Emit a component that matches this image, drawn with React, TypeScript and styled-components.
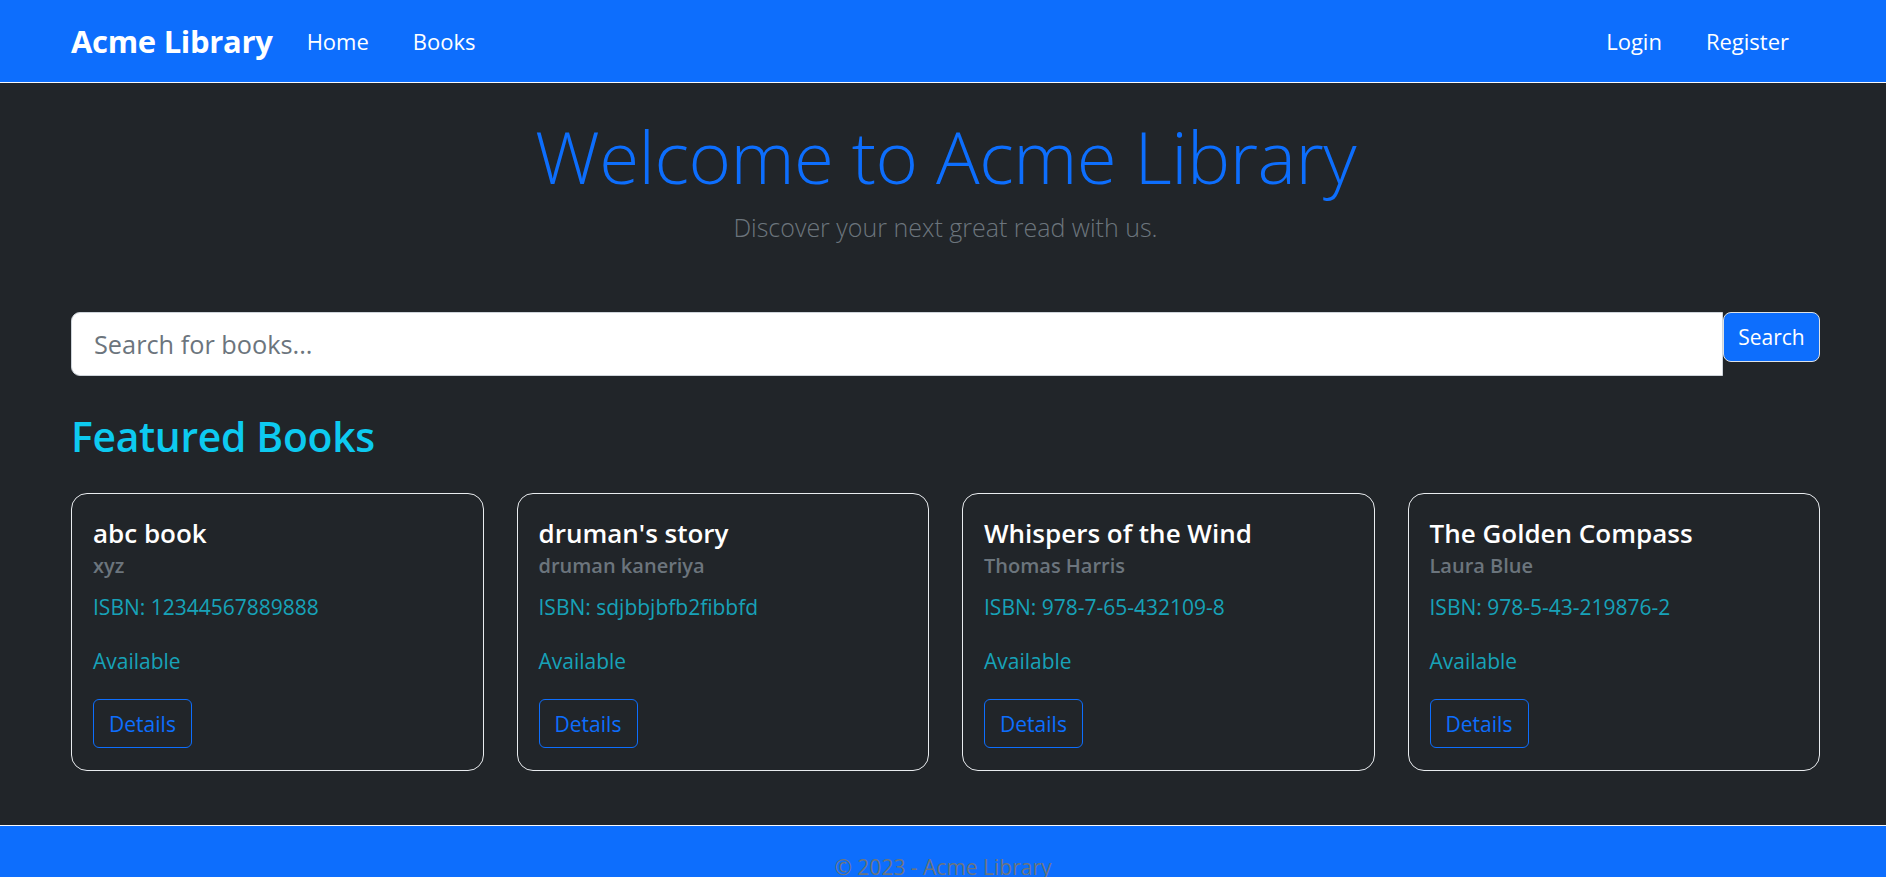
import React from "react";
import styled, { createGlobalStyle } from "styled-components";

const GlobalStyle = createGlobalStyle`
  html, body {
    margin: 0;
    padding: 0;
    background-color: #212529;
    font-family: "Open Sans", "Noto Sans", sans-serif;
  }
  * {
    box-sizing: border-box;
  }
`;

const Page = styled.div`
  display: flex;
  flex-direction: column;
  height: 877px;
  overflow: hidden;
`;

const NavBar = styled.nav`
  display: flex;
  align-items: center;
  height: 83px;
  padding: 0 97px 0 71px;
  background-color: #0d6efd;
  border-bottom: 1px solid #f8f9fa;
`;

const Brand = styled.a`
  font-size: 31px;
  font-weight: 700;
  color: #fff;
  margin-right: 34px;
  letter-spacing: -0.3px;
`;

const NavGroup = styled.div<{ right?: boolean }>`
  display: flex;
  gap: 44px;
  margin-left: ${(props) => (props.right ? "auto" : "0")};
`;

const NavLink = styled.a`
  font-size: 22px;
  color: #fff;
`;

const Main = styled.main`
  flex: 1;
  padding: 0 66px 0 71px;
`;

const Hero = styled.section`
  display: flex;
  flex-direction: column;
  align-items: center;
  padding-top: 28px;
`;

const HeroTitle = styled.h1`
  margin: 0;
  font-size: 72.6px;
  font-weight: 300;
  line-height: 90px;
  color: #0d6efd;
  letter-spacing: -0.5px;
`;

const HeroLead = styled.p`
  margin: 8px 0 0;
  font-size: 25px;
  font-weight: 300;
  line-height: 36px;
  color: #6c757d;
`;

const SearchRow = styled.form`
  display: flex;
  align-items: flex-start;
  margin-top: 67px;
`;

const SearchInput = styled.input`
  flex: 1;
  height: 64px;
  padding: 0 22px;
  font-family: inherit;
  font-size: 25.3px;
  color: #212529;
  background-color: #fff;
  border: 1px solid #ced4da;
  border-radius: 9px 0 0 9px;
  outline: none;

  &::placeholder {
    color: #6c757d;
  }
`;

const SearchButton = styled.button`
  width: 97px;
  height: 50px;
  font-family: inherit;
  font-size: 21px;
  color: #fff;
  background-color: #0d6efd;
  border: 1px solid #dee2e6;
  border-radius: 8px;
`;

const SectionTitle = styled.h2`
  margin: 34px 0 0;
  font-size: 40.8px;
  font-weight: 600;
  line-height: 52px;
  color: #0dcaf0;
  letter-spacing: -0.3px;
`;

const CardGrid = styled.div`
  display: grid;
  grid-template-columns: repeat(4, 1fr);
  gap: 33px;
  margin-top: 31px;
`;

const BookCard = styled.div`
  display: flex;
  flex-direction: column;
  align-items: flex-start;
  padding: 21px 21px 22px;
  border: 1px solid #e9ecef;
  border-radius: 16px;
`;

const BookTitle = styled.h5`
  margin: 0;
  font-size: 26px;
  font-weight: 600;
  line-height: 36px;
  color: #fff;
`;

const BookAuthor = styled.h6`
  margin: 0;
  font-size: 20px;
  font-weight: 600;
  line-height: 30px;
  color: #6c757d;
`;

const BookText = styled.p<{ gap: number }>`
  margin: ${(props) => props.gap}px 0 0;
  font-size: 21px;
  line-height: 36px;
  color: #17a2b8;
`;

const DetailsButton = styled.a`
  display: flex;
  align-items: center;
  justify-content: center;
  width: 99px;
  height: 49px;
  margin-top: 20px;
  font-size: 21px;
  color: #0d6efd;
  border: 1px solid #0d6efd;
  border-radius: 6px;
`;

const Footer = styled.footer`
  height: 52px;
  overflow: hidden;
  padding-top: 23px;
  text-align: center;
  font-size: 21px;
  line-height: 36px;
  color: #6c757d;
  background-color: #0d6efd;
  border-top: 1px solid #f8f9fa;
`;

const books = [
  { title: "abc book", author: "xyz", isbn: "12344567889888" },
  { title: "druman's story", author: "druman kaneriya", isbn: "sdjbbjbfb2fibbfd" },
  { title: "Whispers of the Wind", author: "Thomas Harris", isbn: "978-7-65-432109-8" },
  { title: "The Golden Compass", author: "Laura Blue", isbn: "978-5-43-219876-2" },
];

const App: React.FC = () => {
  return (
    <Page>
      <GlobalStyle />
      <NavBar>
        <Brand>Acme Library</Brand>
        <NavGroup>
          <NavLink>Home</NavLink>
          <NavLink>Books</NavLink>
        </NavGroup>
        <NavGroup right>
          <NavLink>Login</NavLink>
          <NavLink>Register</NavLink>
        </NavGroup>
      </NavBar>
      <Main>
        <Hero>
          <HeroTitle>Welcome to Acme Library</HeroTitle>
          <HeroLead>Discover your next great read with us.</HeroLead>
        </Hero>
        <SearchRow onSubmit={(e) => e.preventDefault()}>
          <SearchInput type="text" placeholder="Search for books..." />
          <SearchButton type="submit">Search</SearchButton>
        </SearchRow>
        <SectionTitle>Featured Books</SectionTitle>
        <CardGrid>
          {books.map((book) => (
            <BookCard key={book.title}>
              <BookTitle>{book.title}</BookTitle>
              <BookAuthor>{book.author}</BookAuthor>
              <BookText gap={8}>ISBN: {book.isbn}</BookText>
              <BookText gap={18}>Available</BookText>
              <DetailsButton>Details</DetailsButton>
            </BookCard>
          ))}
        </CardGrid>
      </Main>
      <Footer>© 2023 - Acme Library</Footer>
    </Page>
  );
};

export default App;
